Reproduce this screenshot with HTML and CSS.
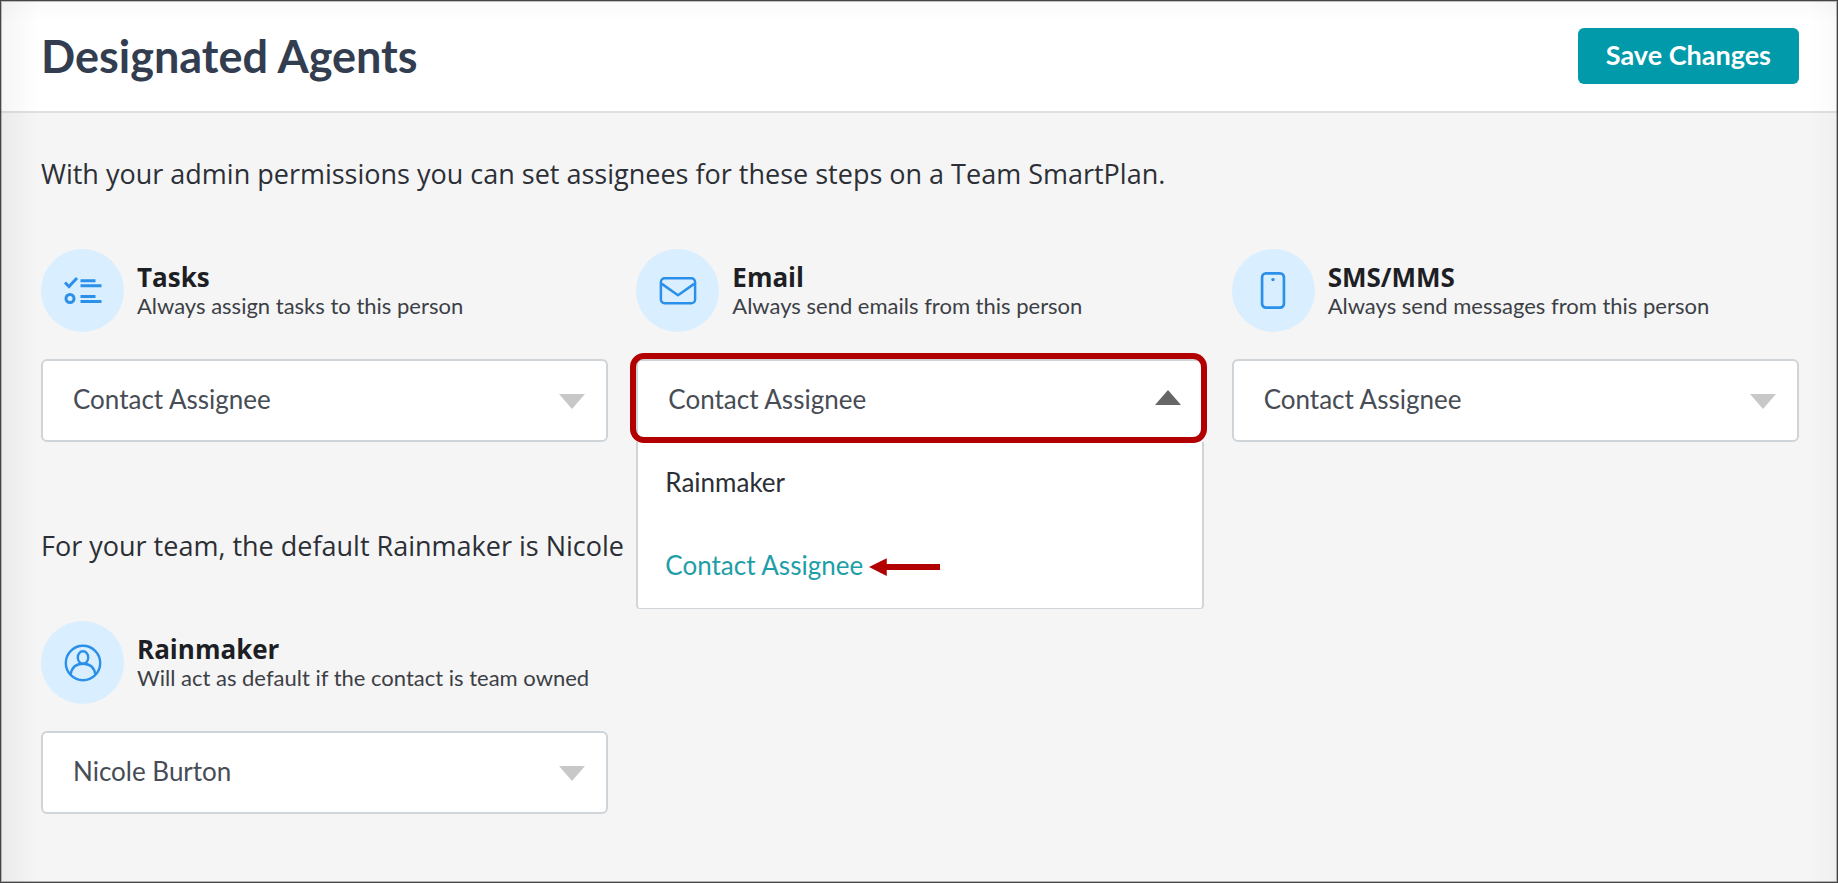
FILE: index.html
```html
<!DOCTYPE html>
<html lang="en">
<head>
<meta charset="utf-8">
<title>Designated Agents</title>
<meta name="viewport" content="width=device-width, initial-scale=1">
<link rel="stylesheet" href="styles.css">
</head>
<body>
<div class="page">
  <header class="header">
    <h1 class="title">Designated Agents</h1>
    <button class="save" type="button">Save Changes</button>
  </header>
  <main class="content">
    <p class="intro">With your admin permissions you can set assignees for these steps on a Team SmartPlan.</p>
    <div class="grid">
      <section class="agent">
        <div class="agent-head">
          <span class="badge">
            <svg class="icon" viewBox="0 0 38 38" aria-hidden="true"><g fill="none" stroke="#2b90ea" stroke-width="3"><path d="M1 10.500l4 4 8-8.500"/><circle cx="6" cy="26.500" r="4"/><path d="M16.500 8.700h15M16.500 13.800h21M16.500 24.400h15M16.500 29.500h21"/></g></svg>
          </span>
          <div>
            <label class="name" for="tasks">Tasks</label>
            <p class="hint">Always assign tasks to this person</p>
          </div>
        </div>
        <div class="field">
          <select class="select" id="tasks"><option>Contact Assignee</option><option>Rainmaker</option></select>
          <svg class="caret" viewBox="0 0 26 15" aria-hidden="true"><path fill="#c8c8c8" d="M0 0h26L13 15z"/></svg>
        </div>
      </section>
      <section class="agent">
        <div class="agent-head">
          <span class="badge">
            <svg class="icon" viewBox="0 0 40 40" aria-hidden="true"><g fill="none" stroke="#2b90ea" stroke-width="2.600" stroke-linejoin="round"><rect x="2" y="6.500" width="36" height="26.500" rx="4"/><path d="M3 12.500l17 12 17-12"/></g></svg>
          </span>
          <div>
            <label class="name" for="email">Email</label>
            <p class="hint">Always send emails from this person</p>
          </div>
        </div>
        <div class="field field-open">
          <select class="select" id="email"><option>Contact Assignee</option><option>Rainmaker</option></select>
          <svg class="caret" viewBox="0 0 26 15" aria-hidden="true"><path fill="#666" d="M0 15h26L13 0z"/></svg>
          <div class="menu">
            <button class="menu-item" type="button">Rainmaker</button>
            <button class="menu-item menu-item-active" type="button">Contact Assignee
              <svg class="pointer" viewBox="0 0 72 18" aria-hidden="true"><path fill="#b20000" d="M0 9L18 0v6h54v6H18v6z"/></svg>
            </button>
          </div>
        </div>
      </section>
      <section class="agent">
        <div class="agent-head">
          <span class="badge">
            <svg class="icon" viewBox="0 0 40 40" aria-hidden="true"><rect x="8.500" y="1.500" width="23" height="36" rx="4" fill="none" stroke="#2b90ea" stroke-width="2.800"/><circle cx="20" cy="8" r="1.800" fill="#2b90ea"/></svg>
          </span>
          <div>
            <label class="name" for="sms">SMS/MMS</label>
            <p class="hint">Always send messages from this person</p>
          </div>
        </div>
        <div class="field">
          <select class="select" id="sms"><option>Contact Assignee</option><option>Rainmaker</option></select>
          <svg class="caret" viewBox="0 0 26 15" aria-hidden="true"><path fill="#c8c8c8" d="M0 0h26L13 15z"/></svg>
        </div>
      </section>
    </div>
    <p class="intro">For your team, the default Rainmaker is Nicole</p>
    <div class="grid">
      <section class="agent">
        <div class="agent-head">
          <span class="badge">
            <svg class="icon" viewBox="0 0 38 38" aria-hidden="true"><g fill="none" stroke="#2b90ea" stroke-width="2.400"><circle cx="19" cy="19" r="17.200"/><ellipse cx="19" cy="13.500" rx="5.200" ry="6.300"/><path d="M6.500 31C7.500 24 12 19.800 19 19.800S30.500 24 31.500 31"/></g></svg>
          </span>
          <div>
            <label class="name" for="rainmaker">Rainmaker</label>
            <p class="hint">Will act as default if the contact is team owned</p>
          </div>
        </div>
        <div class="field">
          <select class="select" id="rainmaker"><option>Nicole Burton</option></select>
          <svg class="caret" viewBox="0 0 26 15" aria-hidden="true"><path fill="#c8c8c8" d="M0 0h26L13 15z"/></svg>
        </div>
      </section>
    </div>
  </main>
</div>
</body>
</html>
```
FILE: styles.css
```css
* { box-sizing: border-box; }

body {
  margin: 0;
  font-family: Lato, "Open Sans", sans-serif;
  color: #2c2f36;
  background: #f5f5f5;
}

h1, p { margin: 0; }

.page {
  position: relative;
  min-height: 100vh;
  border: 1px solid #444;
}

/* Soft vignette along the window's edges */
.page::after {
  content: "";
  position: absolute;
  inset: 0;
  pointer-events: none;
  border: 1px solid rgba(0, 0, 0, 0.25);
  background:
    linear-gradient(to right, rgba(0, 0, 0, 0.04), transparent 36px),
    linear-gradient(to left, rgba(0, 0, 0, 0.02), transparent 28px),
    linear-gradient(to bottom, rgba(0, 0, 0, 0.02), transparent 20px);
}

.header {
  display: flex;
  align-items: center;
  justify-content: space-between;
  height: 112px;
  padding: 0 38px 0 40px;
  background: #fff;
  border-bottom: 2px solid #dfe0e2;
}

.title {
  font-size: 45px;
  line-height: 56px;
  font-weight: 700;
  color: #333d50;
}

.save {
  height: 56px;
  padding: 0 28px 2px;
  border: 0;
  border-radius: 6px;
  background: #009aaa;
  color: #fff;
  font: 700 27px/32px Lato, sans-serif;
}

.content { padding: 43px 38px 67px 40px; }

.intro {
  font-family: "Open Sans", sans-serif;
  font-size: 27px;
  line-height: 36px;
}

.grid {
  display: grid;
  grid-template-columns: repeat(3, 1fr);
  column-gap: 28px;
  padding: 57px 0 86px;
}

.grid:last-child { padding-bottom: 0; }

.agent-head {
  display: flex;
  align-items: center;
  gap: 13px;
  margin-bottom: 27px;
}

.badge {
  display: flex;
  align-items: center;
  justify-content: center;
  flex: none;
  width: 83px;
  height: 83px;
  border-radius: 50%;
  background: #d9eeff;
}

.icon { width: 38px; height: 38px; }

.name {
  display: block;
  font-family: "Open Sans", sans-serif;
  font-size: 26px;
  line-height: 30px;
  font-weight: 700;
  color: #1d1f24;
}

.hint {
  font-size: 22px;
  line-height: 28px;
  color: #3c3f46;
}

.field { position: relative; }

.select {
  display: block;
  width: 100%;
  height: 83px;
  padding: 0 30px 4px;
  appearance: none;
  border: 2px solid #cfd4d8;
  border-radius: 6px;
  background: #fff;
  color: #474c55;
  font: 400 26px/32px Lato, sans-serif;
}

.caret {
  position: absolute;
  top: 35px;
  right: 23px;
  width: 26px;
  height: 15px;
  pointer-events: none;
}

.field-open .caret { top: 31px; }

.field-open::before {
  content: "";
  position: absolute;
  inset: -6px -3px -1px -6px;
  z-index: 2;
  border: 6px solid #b20000;
  border-radius: 14px;
  pointer-events: none;
}

.menu {
  position: absolute;
  top: 100%;
  left: 0;
  right: 0;
  z-index: 1;
  border: solid #cfd4d8;
  border-width: 0 2px 1px;
  border-radius: 0 0 4px 4px;
  background: #fff;
}

.menu-item {
  display: flex;
  align-items: center;
  gap: 6px;
  width: 100%;
  height: 83px;
  padding: 0 27px 4px;
  border: 0;
  background: none;
  color: #2c2f36;
  font: 400 26px/32px Lato, sans-serif;
}

.menu-item-active { color: #1f9ea8; }

.pointer {
  width: 71px;
  height: 18px;
  margin-top: 4px;
}
```
